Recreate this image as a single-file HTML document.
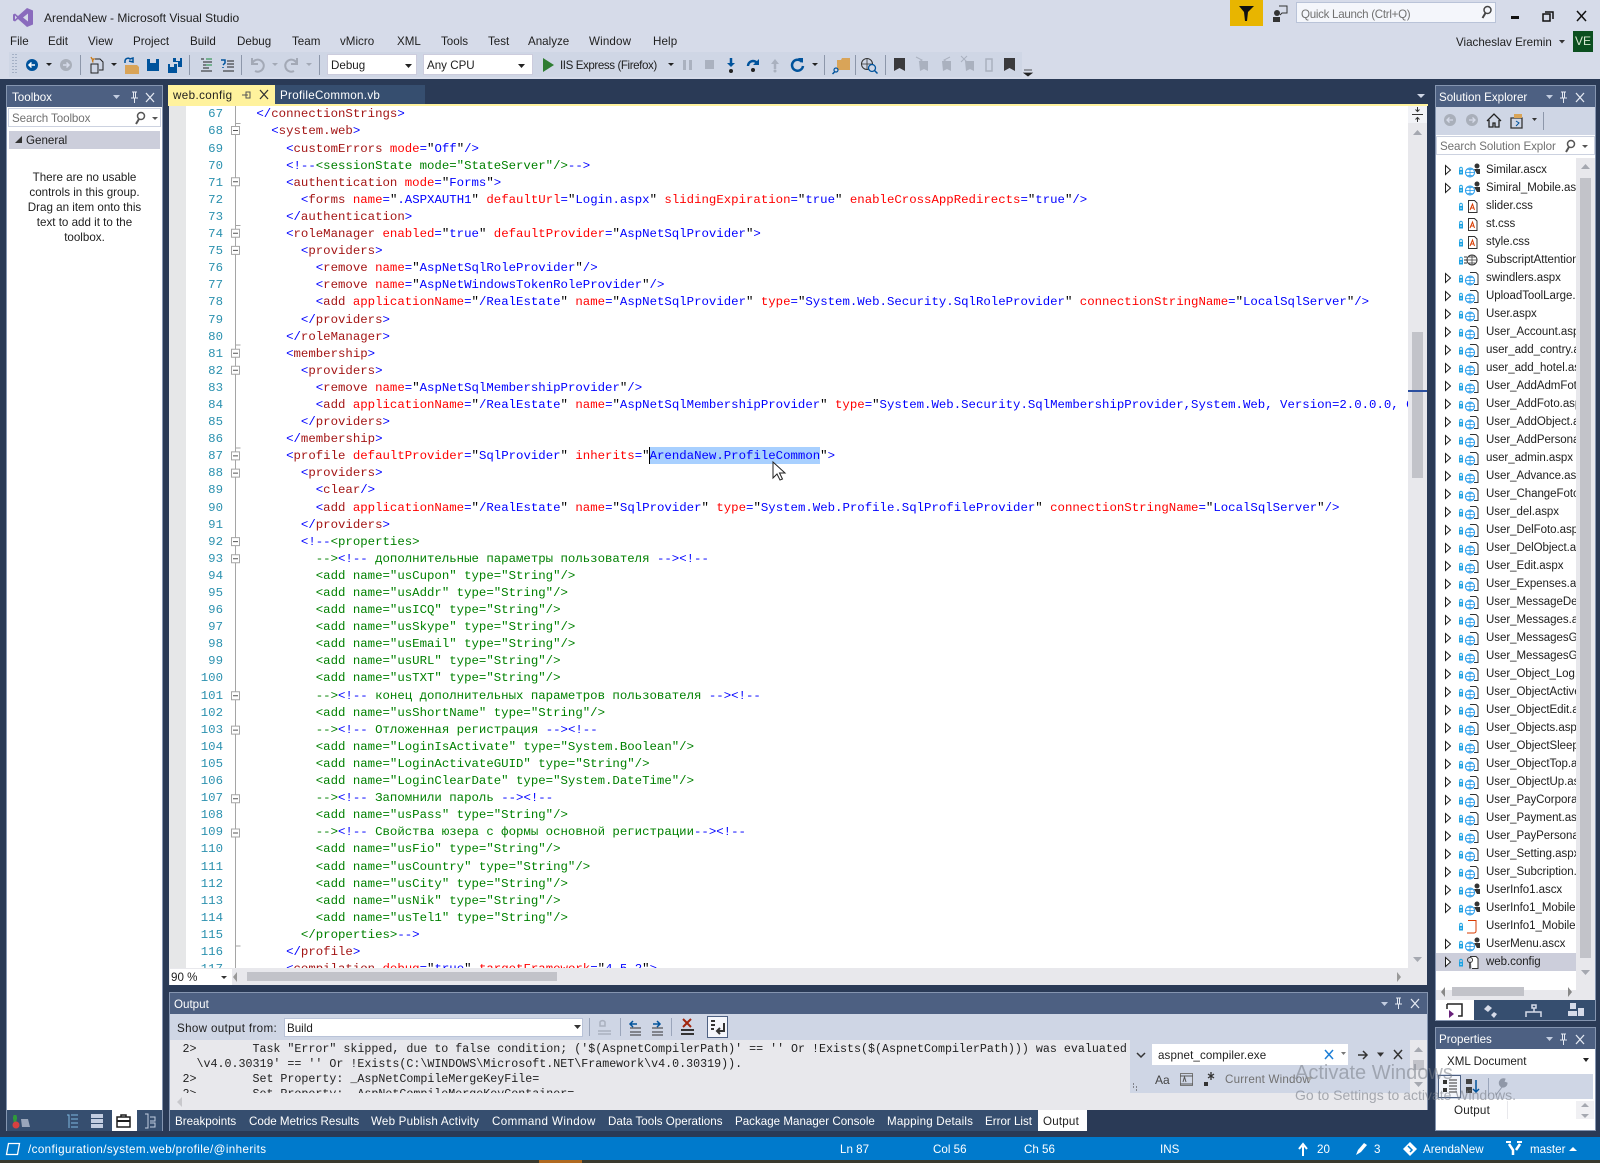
<!DOCTYPE html>
<html lang="en"><head><meta charset="utf-8"><title>ArendaNew - Microsoft Visual Studio</title>
<style>
*{box-sizing:border-box}
html,body{margin:0;padding:0}
body{width:1600px;height:1163px;position:relative;overflow:hidden;background:#d6dbe9;font:12px/16px "Liberation Sans",sans-serif;color:#1e1e1e}
.t{position:absolute;white-space:nowrap;line-height:16px;margin-top:1px}
.b{position:absolute}
.w{color:#fff}
.n{font-size:11.6px}
#code{position:absolute;left:256.4px;top:106.4px;margin:0;font:12.37px/17.1px "Liberation Mono",monospace;color:#000;white-space:pre}
#code b,#code i,#code s,#code u{font-weight:400;font-style:normal;text-decoration:none}
#code b{color:#a31515}#code i{color:#f00}#code s{color:#00f}#code u{color:#008000}
#nums{position:absolute;left:190px;width:33px;top:106.4px;margin:0;text-align:right;font:12.37px/17.1px "Liberation Mono",monospace;color:#2b91af;white-space:pre}
#out{position:absolute;left:182.5px;top:1042px;margin:0;font:11.67px/15px "Liberation Mono",monospace;color:#1e1e1e;white-space:pre}
#se p{margin:0;height:18px;line-height:18px;white-space:nowrap;position:relative;padding-left:50px;font-size:11.5px;letter-spacing:-.04px;color:#1e1e1e}
#se svg{position:absolute;left:0;top:0;width:50px;height:18px}
</style></head><body>
<svg width="0" height="0" style="position:absolute"><defs>
<g id="lock"><rect x="23" y="9" width="4" height="4.500" fill="#1ba1e2"/><rect x="24.500" y="10.500" width="1" height="1.500" fill="#fff"/><path d="M23.700 9V7.500a1.300 1.300 0 0 1 2.600 0V9" fill="none" stroke="#1ba1e2"/></g>
<path id="arr" d="M9.500 4.500l5 4.500-5 4.500z" fill="#fff" stroke="#1e1e1e"/>
<g id="globe"><circle cx="34" cy="11.500" r="4.500" fill="#fff" stroke="#1c97ea"/><path d="M29.500 11.500h9M34 7v9M31.500 8.500h5M31.500 14.500h5" stroke="#1c97ea" fill="none" stroke-width=".8"/></g>
<symbol id="A" viewBox="0 0 50 18"><use href="#arr"/><use href="#lock"/><path d="M34 3.500h6l2 2v10h-4" fill="#fff" stroke="#333"/><use href="#globe"/></symbol>
<symbol id="U" viewBox="0 0 50 18"><use href="#arr"/><use href="#lock"/><circle cx="41" cy="5" r="2.500" fill="#333"/><path d="M38 8h6v5h-3z" fill="#333"/><use href="#globe"/></symbol>
<symbol id="C" viewBox="0 0 50 18"><use href="#lock"/><path d="M32.500 3.500h6l2.500 2.500v9.500h-8.500z" fill="#fff" stroke="#333"/><path d="M34 13l2.500-6 2 6M35 11h3" stroke="#d83b01" fill="none"/></symbol>
<symbol id="G" viewBox="0 0 50 18"><use href="#lock"/><path d="M28 6h3M28 9h3M28 12h3" stroke="#333"/><circle cx="36" cy="9" r="5" fill="#fff" stroke="#333"/><path d="M31 9h10M36 4v10M33 6h6M33 12h6" stroke="#333" fill="none" stroke-width=".7"/></symbol>
<symbol id="O" viewBox="0 0 50 18"><use href="#lock"/><path d="M32 3.500h8v10.500a2 2 0 0 1-2 2h-7" fill="#fff" stroke="#d83b01"/><path d="M34 3.500h6" stroke="#d83b01"/></symbol>
<symbol id="W" viewBox="0 0 50 18"><path d="M9.500 4.500l5 4.500-5 4.500z" fill="#fff" stroke="#1e1e1e"/><use href="#lock"/><path d="M34 3.500h6l2 2v10h-6" fill="#fff" stroke="#333"/><circle cx="34" cy="7" r="2.500" fill="none" stroke="#333"/><path d="M34 9.500v6" stroke="#333" stroke-width="1.500"/></symbol>
</defs></svg>

<!-- title bar -->
<svg class="b" style="left:13px;top:7px" width="20" height="21" viewBox="0 0 20 21"><path d="M14 1l6 2.500v14L14 20 5 12l-3 2.500L0 13.500v-6l2-1 3 2.500z" fill="#8a6bbd"/><path d="M15 6.500l-5 4 5 4z" fill="#d6dbe9"/><path d="M2 8.500v4l2-2z" fill="#d6dbe9"/></svg>
<div class="t n" style="left:44px;top:9px;font-size:12px">ArendaNew - Microsoft Visual Studio</div>
<div class="t n" style="left:10px;top:33px">File</div><div class="t n" style="left:48px;top:33px">Edit</div><div class="t n" style="left:88px;top:33px">View</div><div class="t n" style="left:133px;top:33px">Project</div><div class="t n" style="left:190px;top:33px">Build</div><div class="t n" style="left:237px;top:33px">Debug</div><div class="t n" style="left:292px;top:33px">Team</div><div class="t n" style="left:340px;top:33px">vMicro</div><div class="t n" style="left:397px;top:33px">XML</div><div class="t n" style="left:441px;top:33px">Tools</div><div class="t n" style="left:488px;top:33px">Test</div><div class="t n" style="left:528px;top:33px">Analyze</div><div class="t n" style="left:589px;top:33px;letter-spacing:.15px">Window</div><div class="t n" style="left:653px;top:33px;letter-spacing:.1px">Help</div>

<div class="b" style="left:1230px;top:0;width:33px;height:26px;background:#e8b500"></div>
<svg class="b" style="left:1230px;top:0" width="80" height="26"><path d="M9 6h15l-6 6-1 9-2 0-1-9z" fill="#111"/><circle cx="47" cy="13" r="3" fill="#333"/><path d="M43 17h7v5h-7z" fill="#333"/><path d="M49 6h8v7h-5l-2 2" fill="none" stroke="#333"/></svg>
<div class="b" style="left:1296px;top:2px;width:200px;height:21px;background:#f4f6fb;border:1px solid #b9c3d8"></div>
<div class="t n" style="left:1301px;top:6px;color:#717171;letter-spacing:-.3px">Quick Launch (Ctrl+Q)</div>
<svg class="b" style="left:1478px;top:4px" width="16" height="16"><circle cx="9.500" cy="6" r="3.500" fill="none" stroke="#444" stroke-width="1.500"/><path d="M7.500 9l-3 5" stroke="#444" stroke-width="2"/></svg>
<svg class="b" style="left:1505px;top:6px" width="90" height="18"><path d="M6 10h8v3H6z" fill="#111"/><path d="M40 6h8v7M38 8h7v7h-7z" fill="none" stroke="#111" stroke-width="1.500"/><path d="M72 5l9 10M81 5l-9 10" stroke="#111" stroke-width="1.500"/></svg>
<div class="t n" style="left:1456px;top:34px">Viacheslav Eremin</div>
<svg class="b" style="left:1558px;top:39px" width="8" height="6"><path d="M1 1h6L4 4.500z" fill="#333"/></svg>
<div class="b" style="left:1573px;top:31px;width:20px;height:21px;background:#0b4f1f;color:#d8e8d0;font-size:12px;line-height:21px;text-align:center">VE</div>

<!-- toolbar -->
<div class="b" style="left:9px;top:52px;width:1013px;height:25px;background:#cfd6e5"></div>
<div class="b" style="left:327px;top:54px;width:90px;height:21px;background:#fff;border:1px solid #ccd"></div>
<div class="b" style="left:423px;top:54px;width:110px;height:21px;background:#fff;border:1px solid #ccd"></div>
<div class="t n" style="left:331px;top:57px">Debug</div><div class="t n" style="left:427px;top:57px">Any CPU</div>
<div class="t n" style="left:560px;top:57px;letter-spacing:-.42px">IIS Express (Firefox)</div>
<svg class="b" style="left:0;top:50px" width="1040" height="30" viewBox="0 0 1040 30">
<path d="M13 4v21M16 4v21" stroke="#7a8aa5" stroke-dasharray="1 2"/>
<circle cx="32" cy="15" r="6" fill="#00539c"/><path d="M35 15h-6m2.500-2.500L29 15l2.500 2.500" stroke="#fff" stroke-width="1.500" fill="none"/>
<path d="M46 13h6l-3 3z" fill="#222"/>
<circle cx="66" cy="15" r="6" fill="#a9afba"/><path d="M63 15h6m-2.500-2.500L69 15l-2.500 2.500" stroke="#d6dbe9" stroke-width="1.500" fill="none"/>
<path d="M80.500 5v20M189.500 5v20M241.500 5v20M319.500 5v20M824.500 5v20M855.500 5v20M885.500 5v20" stroke="#8d97aa"/>
<path d="M95 9h5l3 3v8h-4M91 14h7v9h-7z" fill="none" stroke="#222"/><path d="M91 7l1 2 2 0-1.500 1.500.5 2" fill="none" stroke="#c87a1a" stroke-width="1.300"/>
<path d="M111 13h6l-3 3z" fill="#222"/>
<path d="M125 15h12l2 2v7h-14z" fill="#d9a458"/><path d="M125 13v-2a3 3 0 0 1 5-2l3-1v4l-4-1" fill="none" stroke="#00539c" stroke-width="1.500"/>
<path d="M147 9h12v12h-12z" fill="#00539c"/><path d="M150 9h6v4h-6z" fill="#cfd6e5"/>
<path d="M168 14h9v9h-9z" fill="#00539c"/><path d="M173 8h9v9h-4v-5h-5z" fill="#00539c"/><path d="M176 8h4v3h-4zM170 14h4v3h-4z" fill="#cfd6e5"/>
<path d="M201 9h3M203 12h9M203 15h9M203 18h6M201 21h11" stroke="#222"/><path d="M206 9h6M206 15h6" stroke="#1a8a3a"/>
<path d="M221 10h4v3l-2 2M223 17v1" stroke="#00539c" stroke-width="1.500" fill="none"/><path d="M227 11h7M227 14h7M227 17h7M223 21h11" stroke="#222"/>
<path d="M252 8v6h6M252 14a6 6 0 1 1 3 7" fill="none" stroke="#a3a9b6" stroke-width="2"/><path d="M272 13h6l-3 3z" fill="#a3a9b6"/>
<path d="M297 8v6h-6M297 14a6 6 0 1 0-3 7" fill="none" stroke="#a3a9b6" stroke-width="2"/><path d="M306 13h6l-3 3z" fill="#a3a9b6"/>
<path d="M405 14h7l-3.500 4zM518 14h7l-3.500 4z" fill="#222"/>
<path d="M543 8l11 7-11 7z" fill="#2f7d32"/>
<path d="M668 13h6l-3 3z" fill="#222"/>
<path d="M683 10h3v10h-3zM689 10h3v10h-3zM705 10h9v9h-9z" fill="#aab1bf"/>
<path d="M731 8v7" stroke="#00539c" stroke-width="2.500"/><path d="M727 13l4 4 4-4z" fill="#00539c"/><circle cx="731" cy="21" r="2" fill="#222"/>
<path d="M748 16a5 5 0 0 1 9-3" fill="none" stroke="#00539c" stroke-width="2.500"/><path d="M759 9v6h-6z" fill="#00539c"/><circle cx="753" cy="20" r="2" fill="#222"/>
<path d="M775 19v-6" stroke="#aab1bf" stroke-width="2.500"/><path d="M771 14l4-5 4 5z" fill="#aab1bf"/><circle cx="775" cy="21" r="1.500" fill="#aab1bf"/>
<path d="M802 12a5.500 5.500 0 1 0 1 4" fill="none" stroke="#00539c" stroke-width="2.500"/><path d="M798 8l5 0 0 5z" fill="#00539c"/><path d="M812 13h6l-3 3z" fill="#222"/>
<path d="M837 10h4l1-2h8v12h-13z" fill="#d9a458"/><circle cx="836" cy="20" r="2" fill="#cfd6e5" stroke="#00539c" stroke-width="1.200"/><path d="M834.500 22l-2 2" stroke="#00539c" stroke-width="1.500"/>
<circle cx="867" cy="14" r="5.500" fill="none" stroke="#333"/><path d="M861.500 14h11M867 8.500v11" stroke="#333" stroke-width=".8"/><circle cx="872" cy="18" r="3.500" fill="#cfd6e5" stroke="#00539c" stroke-width="1.300"/><path d="M874.500 20.500l3 3" stroke="#00539c" stroke-width="1.500"/>
<path d="M894 8h11v13l-5.500-3-5.500 3zM1004 8h11v13l-5.500-3-5.500 3z" fill="#3a3a3c"/>
<path d="M919 11h9v10l-4-2-4 2zM942 11h9v10l-4-2-4 2zM965 11h9v10l-4-2-4 2z" fill="#aab1bf"/><path d="M916 7l6 3-3 2M950 7l-6 3 3 2M961 6l6 6M967 6l-6 6" stroke="#aab1bf" fill="none"/>
<path d="M986 9h6v12h-6z" fill="none" stroke="#aab1bf" stroke-width="1.500"/>
<path d="M1024 20h8M1024 23h8l-4 3z" fill="#222" stroke="#222" stroke-width=".8"/>
</svg>

<!-- dark body -->
<div class="b" style="left:0;top:79px;width:1600px;height:1058px;background:#2a3a56"></div>

<!-- toolbox -->
<div class="b" style="left:6px;top:85px;width:157px;height:1046px;background:#fff;border:1px solid #8595b0"></div>
<div class="b" style="left:7px;top:86px;width:155px;height:21px;background:#4d6082"></div>
<div class="t n w" style="left:12px;top:89px">Toolbox</div>
<svg class="b" style="left:110px;top:88px" width="50" height="18"><path d="M3 7h7l-3.500 4z" fill="#c3cde0"/><path d="M22 4h5M23.500 4v6h2V4M21 10h7M24.500 10v5" stroke="#e4e9f2" fill="none"/><path d="M36 5l8 9M44 5l-8 9" stroke="#e4e9f2" stroke-width="1.300"/></svg>
<div class="b" style="left:8px;top:108px;width:153px;height:19px;background:#fff;border:1px solid #ccd2e0"></div>
<div class="t n" style="left:12px;top:110px;color:#717171;letter-spacing:-.1px">Search Toolbox</div>
<svg class="b" style="left:132px;top:110px" width="28" height="16"><circle cx="9" cy="6" r="3.500" fill="none" stroke="#555" stroke-width="1.500"/><path d="M7 9l-3 5" stroke="#555" stroke-width="2"/><path d="M20 7h6l-3 3z" fill="#555"/></svg>
<div class="b" style="left:9px;top:131px;width:151px;height:18px;background:#cccedb"></div>
<svg class="b" style="left:14px;top:135px" width="9" height="9"><path d="M8 1v7H1z" fill="#333"/></svg>
<div class="t n" style="left:26px;top:132px">General</div>
<div class="b n" style="left:9px;top:169.500px;width:151px;text-align:center;line-height:15px">There are no usable<br>controls in this group.<br>Drag an item onto this<br>text to add it to the<br>toolbox.</div>
<div class="b" style="left:7px;top:1110px;width:155px;height:21px;background:#364e6f"></div>
<div class="b" style="left:112px;top:1110px;width:25px;height:21px;background:#fff"></div>
<svg class="b" style="left:7px;top:1110px" width="155" height="21"><path d="M8 5v7M6 8h4" stroke="#2f9a3a" stroke-width="3"/><circle cx="9" cy="15" r="3.500" fill="#d84040"/><path d="M14 9h7l2 8h-8z" fill="#9aa6bb"/><path d="M60 5h2v13M64 5h7M64 9h7M64 13h7M64 17h7" stroke="#7fb8e0" fill="none"/><path d="M84 4h12v4H84zM84 9h12v4H84zM84 14h12v4H84z" fill="#c3cde0"/><path d="M110 7h13v10h-13zM114 7V5h5v2" fill="none" stroke="#1e1e1e" stroke-width="1.500"/><path d="M110 11h13" stroke="#1e1e1e" stroke-width="2"/><path d="M138 4h3v14h-3M143 7h5v4h-5M143 13h5v4h-5" fill="none" stroke="#c3cde0"/></svg>

<!-- doc tabs -->
<div class="b" style="left:168px;top:85px;width:107px;height:19px;background:#fff29d"></div>
<div class="t n" style="left:173px;top:87px;letter-spacing:.4px">web.config</div>
<svg class="b" style="left:240px;top:88px" width="32" height="14"><path d="M2 7h6M6 4v6h4V4z" stroke="#555" fill="none"/><path d="M20 2l8 9M28 2l-8 9" stroke="#333" stroke-width="1.300"/></svg>
<div class="b" style="left:275px;top:85px;width:150px;height:19px;background:#364e6f"></div>
<div class="t n w" style="left:280px;top:87px;letter-spacing:.3px">ProfileCommon.vb</div>
<div class="b" style="left:168px;top:104px;width:1260px;height:2px;background:#fff29d"></div>
<svg class="b" style="left:1416px;top:92px" width="10" height="8"><path d="M1 2h8L5 6z" fill="#cfd6e5"/></svg>

<!-- editor -->
<div class="b" style="left:169px;top:106px;width:1239px;height:862px;background:#fff;overflow:hidden" id="ed">
<div class="b" style="left:0;top:0;width:17px;height:862px;background:#e6e7e8"></div>
</div>
<div class="b" style="left:169px;top:106px;width:1239px;height:862px;overflow:hidden">
<div style="position:absolute;left:-169px;top:-106px;width:1600px;height:1163px">
<div class="b" style="left:649.300px;top:447px;width:170.700px;height:17px;background:#a8d0ff"></div>
<pre id="nums">67
68
69
70
71
72
73
74
75
76
77
78
79
80
81
82
83
84
85
86
87
88
89
90
91
92
93
94
95
96
97
98
99
100
101
102
103
104
105
106
107
108
109
110
111
112
113
114
115
116
117</pre>
<svg class="b" style="left:228px;top:106px" width="16" height="880"><path d="M7.500 0v880" stroke="#a5a5a5"/>
<g fill="#fff" stroke="#a5a5a5"><path d="M3.500 20.500h8v8h-8zM3.500 71.800h8v8h-8zM3.500 123.200h8v8h-8zM3.500 140.400h8v8h-8zM3.500 243.200h8v8h-8zM3.500 260.300h8v8h-8zM3.500 345.900h8v8h-8zM3.500 363.100h8v8h-8zM3.500 431.600h8v8h-8zM3.500 448.700h8v8h-8zM3.500 585.800h8v8h-8zM3.500 620.100h8v8h-8zM3.500 688.700h8v8h-8zM3.500 723h8v8h-8z"/></g>
<path d="M5 24.500h5M5 75.800h5M5 127.200h5M5 144.400h5M5 247.200h5M5 264.300h5M5 349.900h5M5 367.100h5M5 435.600h5M5 452.700h5M5 589.800h5M5 624.100h5M5 692.700h5M5 727h5" stroke="#555"/>
<path d="M7.500 17.500h5M7.500 119.500h5M7.500 239h5M7.500 342h5M7.500 840h5" stroke="#a5a5a5"/></svg>
<pre id="code"><s>&lt;/</s><b>connectionStrings</b><s>&gt;</s>
  <s>&lt;</s><b>system.web</b><s>&gt;</s>
    <s>&lt;</s><b>customErrors</b> <i>mode</i><s>=</s>"<s>Off</s>"<s>/&gt;</s>
    <s>&lt;!--</s><u>&lt;sessionState mode="StateServer"/&gt;</u><s>--&gt;</s>
    <s>&lt;</s><b>authentication</b> <i>mode</i><s>=</s>"<s>Forms</s>"<s>&gt;</s>
      <s>&lt;</s><b>forms</b> <i>name</i><s>=</s>"<s>.ASPXAUTH1</s>" <i>defaultUrl</i><s>=</s>"<s>Login.aspx</s>" <i>slidingExpiration</i><s>=</s>"<s>true</s>" <i>enableCrossAppRedirects</i><s>=</s>"<s>true</s>"<s>/&gt;</s>
    <s>&lt;/</s><b>authentication</b><s>&gt;</s>
    <s>&lt;</s><b>roleManager</b> <i>enabled</i><s>=</s>"<s>true</s>" <i>defaultProvider</i><s>=</s>"<s>AspNetSqlProvider</s>"<s>&gt;</s>
      <s>&lt;</s><b>providers</b><s>&gt;</s>
        <s>&lt;</s><b>remove</b> <i>name</i><s>=</s>"<s>AspNetSqlRoleProvider</s>"<s>/&gt;</s>
        <s>&lt;</s><b>remove</b> <i>name</i><s>=</s>"<s>AspNetWindowsTokenRoleProvider</s>"<s>/&gt;</s>
        <s>&lt;</s><b>add</b> <i>applicationName</i><s>=</s>"<s>/RealEstate</s>" <i>name</i><s>=</s>"<s>AspNetSqlProvider</s>" <i>type</i><s>=</s>"<s>System.Web.Security.SqlRoleProvider</s>" <i>connectionStringName</i><s>=</s>"<s>LocalSqlServer</s>"<s>/&gt;</s>
      <s>&lt;/</s><b>providers</b><s>&gt;</s>
    <s>&lt;/</s><b>roleManager</b><s>&gt;</s>
    <s>&lt;</s><b>membership</b><s>&gt;</s>
      <s>&lt;</s><b>providers</b><s>&gt;</s>
        <s>&lt;</s><b>remove</b> <i>name</i><s>=</s>"<s>AspNetSqlMembershipProvider</s>"<s>/&gt;</s>
        <s>&lt;</s><b>add</b> <i>applicationName</i><s>=</s>"<s>/RealEstate</s>" <i>name</i><s>=</s>"<s>AspNetSqlMembershipProvider</s>" <i>type</i><s>=</s>"<s>System.Web.Security.SqlMembershipProvider,System.Web, Version=2.0.0.0, Culture</s>"
      <s>&lt;/</s><b>providers</b><s>&gt;</s>
    <s>&lt;/</s><b>membership</b><s>&gt;</s>
    <s>&lt;</s><b>profile</b> <i>defaultProvider</i><s>=</s>"<s>SqlProvider</s>" <i>inherits</i><s>=</s>"<s>ArendaNew.ProfileCommon</s>"<s>&gt;</s>
      <s>&lt;</s><b>providers</b><s>&gt;</s>
        <s>&lt;</s><b>clear</b><s>/&gt;</s>
        <s>&lt;</s><b>add</b> <i>applicationName</i><s>=</s>"<s>/RealEstate</s>" <i>name</i><s>=</s>"<s>SqlProvider</s>" <i>type</i><s>=</s>"<s>System.Web.Profile.SqlProfileProvider</s>" <i>connectionStringName</i><s>=</s>"<s>LocalSqlServer</s>"<s>/&gt;</s>
      <s>&lt;/</s><b>providers</b><s>&gt;</s>
      <s>&lt;!--</s><u>&lt;properties&gt;</u>
        <u>--&gt;</u><s>&lt;!--</s><u> дополнительные параметры пользователя </u><s>--&gt;&lt;!--</s>
        <u>&lt;add name="usCupon" type="String"/&gt;</u>
        <u>&lt;add name="usAddr" type="String"/&gt;</u>
        <u>&lt;add name="usICQ" type="String"/&gt;</u>
        <u>&lt;add name="usSkype" type="String"/&gt;</u>
        <u>&lt;add name="usEmail" type="String"/&gt;</u>
        <u>&lt;add name="usURL" type="String"/&gt;</u>
        <u>&lt;add name="usTXT" type="String"/&gt;</u>
        <u>--&gt;</u><s>&lt;!--</s><u> конец дополнительных параметров пользователя </u><s>--&gt;&lt;!--</s>
        <u>&lt;add name="usShortName" type="String"/&gt;</u>
        <u>--&gt;</u><s>&lt;!--</s><u> Отложенная регистрация </u><s>--&gt;&lt;!--</s>
        <u>&lt;add name="LoginIsActivate" type="System.Boolean"/&gt;</u>
        <u>&lt;add name="LoginActivateGUID" type="String"/&gt;</u>
        <u>&lt;add name="LoginClearDate" type="System.DateTime"/&gt;</u>
        <u>--&gt;</u><s>&lt;!--</s><u> Запомнили пароль </u><s>--&gt;&lt;!--</s>
        <u>&lt;add name="usPass" type="String"/&gt;</u>
        <u>--&gt;</u><s>&lt;!--</s><u> Свойства юзера с формы основной регистрации</u><s>--&gt;&lt;!--</s>
        <u>&lt;add name="usFio" type="String"/&gt;</u>
        <u>&lt;add name="usCountry" type="String"/&gt;</u>
        <u>&lt;add name="usCity" type="String"/&gt;</u>
        <u>&lt;add name="usNik" type="String"/&gt;</u>
        <u>&lt;add name="usTel1" type="String"/&gt;</u>
      <u>&lt;/properties&gt;</u><s>--&gt;</s>
    <s>&lt;/</s><b>profile</b><s>&gt;</s>
    <s>&lt;</s><b>compilation</b> <i>debug</i><s>=</s>"<s>true</s>" <i>targetFramework</i><s>=</s>"<s>4.5.2</s>"<s>&gt;</s></pre>
<div class="b" style="left:649px;top:447px;width:1px;height:17px;background:#000"></div>
<svg class="b" style="left:772px;top:461px" width="16" height="22"><path d="M1 1v16l4-4 3 6 2.500-1-3-6h5.500z" fill="#fff" stroke="#222"/></svg>
</div></div>

<!-- editor v scroll -->
<div class="b" style="left:1408px;top:106px;width:19px;height:879px;background:#e8e8ec"></div>
<div class="b" style="left:1408px;top:106px;width:19px;height:17px;background:#f2f3f7"></div>
<svg class="b" style="left:1408px;top:106px" width="19" height="860"><path d="M4 8.500h11M9.500 1v4M7.500 3.500l2 2 2-2M9.500 16v-4M7.500 13.500l2-2 2 2" stroke="#333" fill="none"/><path d="M5 29l4.500-5 4.500 5z" fill="#a5a8b0"/><path d="M5 851l4.500 5 4.500-5z" fill="#a5a8b0"/></svg>
<div class="b" style="left:1412px;top:332px;width:11px;height:146px;background:#c2c3c9"></div>
<div class="b" style="left:1408px;top:390px;width:19px;height:2px;background:#2b4f9f"></div>
<!-- editor h scroll -->
<div class="b" style="left:169px;top:968px;width:1239px;height:17px;background:#e8e8ec"></div>
<div class="b" style="left:170px;top:969px;width:62px;height:16px;background:#fff"></div>
<div class="t n" style="left:171px;top:969px">90 %</div>
<svg class="b" style="left:218px;top:970px" width="20" height="14"><path d="M3 6h6l-3 3z" fill="#333"/><path d="M19 2l-4 5 4 5z" fill="#999"/></svg>
<div class="b" style="left:247px;top:972px;width:310px;height:9px;background:#c2c3c9"></div>
<svg class="b" style="left:1396px;top:970px" width="8" height="14"><path d="M1 2l4 5-4 5z" fill="#999"/></svg>

<!-- output -->
<div class="b" style="left:169px;top:992px;width:1259px;height:139px;background:#e8e8ec;border:1px solid #8595b0"></div>
<div class="b" style="left:170px;top:993px;width:1257px;height:21px;background:#4d6082"></div>
<div class="t n w" style="left:174px;top:996px">Output</div>
<svg class="b" style="left:1378px;top:995px" width="50" height="18"><path d="M3 7h7l-3.500 4z" fill="#c3cde0"/><path d="M18 3h5M19.500 3v6h2V3M17 9h7M20.500 9v5" stroke="#e4e9f2" fill="none"/><path d="M33 4l8 9M41 4l-8 9" stroke="#e4e9f2" stroke-width="1.300"/></svg>
<div class="b" style="left:170px;top:1014px;width:1257px;height:26px;background:#cfd6e5"></div>
<div class="t n" style="left:177px;top:1020px;letter-spacing:.35px">Show output from:</div>
<div class="b" style="left:284px;top:1018px;width:299px;height:19px;background:#fff;border:1px solid #b9c3d8"></div>
<div class="t n" style="left:287px;top:1020px">Build</div>
<svg class="b" style="left:570px;top:1014px" width="170" height="26"><path d="M4 11h7l-3.500 4z" fill="#333"/><path d="M19.500 4v18M50.500 4v18M101.500 4v18" stroke="#9aa5ba"/><path d="M30 8a3 3 0 0 1 5 0v4h-5zM28 17h13M28 20h13" stroke="#aab1bf" fill="none" stroke-width="1.500"/><path d="M60 14h11M60 18h11M60 21h11" stroke="#333"/><path d="M67 10h-7m3-3l-3 3 3 3" stroke="#00539c" stroke-width="1.500" fill="none"/><path d="M82 14h11M82 18h11M82 21h11" stroke="#333"/><path d="M83 10h7m-3-3l3 3-3 3" stroke="#00539c" stroke-width="1.500" fill="none"/><path d="M113 5l8 8M121 5l-8 8" stroke="#a1260d" stroke-width="2"/><path d="M111 16h13M111 20h13" stroke="#333" stroke-width="2"/><rect x="137.500" y="2.500" width="20" height="21" fill="#f4f6fb" stroke="#4d6082"/><path d="M141 7h4M141 11h4M141 15h3" stroke="#333" stroke-width="2"/><path d="M154 9v8h-7m3-3l-3 3 3 3" stroke="#333" stroke-width="2" fill="none"/></svg>
<div class="b" style="left:170px;top:1040px;width:1238px;height:53px;overflow:hidden"><div style="position:absolute;left:-170px;top:-1040px;width:1600px;height:1163px">
<pre id="out">2&gt;        Task "Error" skipped, due to false condition; ('$(AspnetCompilerPath)' == '' Or !Exists($(AspnetCompilerPath))) was evaluated
  \v4.0.30319' == '' Or !Exists(C:\WINDOWS\Microsoft.NET\Framework\v4.0.30319)).
2&gt;        Set Property: _AspNetCompileMergeKeyFile=
2&gt;        Set Property: _AspNetCompileMergeKeyContainer=</pre></div></div>
<div class="b" style="left:1130px;top:1040px;width:280px;height:53px;background:#cfd6e5"></div>
<div class="b" style="left:1152px;top:1044px;width:196px;height:21px;background:#fff"></div>
<div class="t n" style="left:1158px;top:1047px;letter-spacing:.1px">aspnet_compiler.exe</div>
<div class="t n" style="left:1225px;top:1071px;color:#717171;letter-spacing:.2px">Current Window</div>
<div class="t" style="left:1155px;top:1071px;font-size:12px;color:#444">Aa</div>
<svg class="b" style="left:1130px;top:1040px" width="280" height="53"><path d="M7 13l4 4 4-4" stroke="#333" stroke-width="1.500" fill="none"/><path d="M195 10l8 9M203 10l-8 9" stroke="#1c7ed6" stroke-width="1.500"/><path d="M211 12h5l-2.500 3z" fill="#777"/><path d="M228 15h9m-4-4l4 4-4 4" stroke="#333" stroke-width="1.500" fill="none"/><path d="M248 13h5l-2.500 3zM3 47h1M6 47h1M3 44h1M6 50h1" stroke="#333" fill="#333"/><path d="M264 10l8 9M272 10l-8 9" stroke="#333" stroke-width="1.500"/><rect x="50.500" y="33.500" width="12" height="12" fill="none" stroke="#777"/><path d="M50 36h13M50 44h13" stroke="#555"/><path d="M53 42l1.500-5 1.500 5" stroke="#555" fill="none"/><path d="M74 42h4v4h-4z" fill="#333"/><path d="M81 32v8M78 34l6 4M84 34l-6 4" stroke="#333" stroke-width="1.300"/><path d="M176 37h7l-3.500 4z" fill="#aaa"/></svg>
<svg class="b" style="left:1410px;top:1040px" width="17" height="53"><path d="M4 12l4.500-5 4.500 5zM4 42l4.500 5 4.500-5z" fill="#a5a8b0"/><path d="M3 20h11v10H3z" fill="#c2c3c9"/></svg>
<svg class="b" style="left:175px;top:1095px" width="10" height="14"><path d="M7 2l-5 5 5 5z" fill="#c8c8cc"/></svg>
<div class="b" style="left:170px;top:1110px;width:1258px;height:21px;background:#364e6f"></div>
<div class="b" style="left:1038px;top:1110px;width:49px;height:21px;background:#fff"></div>
<div class="b" style="left:1087px;top:1110px;width:342px;height:21px;background:#2a3a56"></div>
<div class="t n w" style="left:175px;top:1113px">Breakpoints</div><div class="t n w" style="left:249px;top:1113px">Code Metrics Results</div><div class="t n w" style="left:371px;top:1113px;letter-spacing:.2px">Web Publish Activity</div><div class="t n w" style="left:492px;top:1113px;letter-spacing:.42px">Command Window</div><div class="t n w" style="left:608px;top:1113px">Data Tools Operations</div><div class="t n w" style="left:735px;top:1113px">Package Manager Console</div><div class="t n w" style="left:887px;top:1113px;letter-spacing:.2px">Mapping Details</div><div class="t n w" style="left:985px;top:1113px">Error List</div><div class="t n" style="left:1043px;top:1113px;letter-spacing:.2px">Output</div>

<!-- solution explorer -->
<div class="b" style="left:1435px;top:85px;width:161px;height:936px;background:#fff;border:1px solid #8595b0"></div>
<div class="b" style="left:1436px;top:86px;width:159px;height:21px;background:#4d6082"></div>
<div class="t n w" style="left:1439px;top:89px">Solution Explorer</div>
<svg class="b" style="left:1543px;top:88px" width="52" height="18"><path d="M3 7h7l-3.500 4z" fill="#c3cde0"/><path d="M18 4h5M19.500 4v6h2V4M17 10h7M20.500 10v5" stroke="#e4e9f2" fill="none"/><path d="M33 5l8 9M41 5l-8 9" stroke="#e4e9f2" stroke-width="1.300"/></svg>
<div class="b" style="left:1436px;top:107px;width:159px;height:28px;background:#cfd6e5"></div>
<svg class="b" style="left:1436px;top:107px" width="159" height="28"><circle cx="14" cy="13" r="6" fill="#a9afba"/><circle cx="36" cy="13" r="6" fill="#a9afba"/><path d="M17 13h-6m2.500-2.500L11 13l2.500 2.500M33 13h6m-2.500-2.500L39 13l-2.500 2.500" stroke="#d6dbe9" stroke-width="1.300" fill="none"/><path d="M51 14l7-7 7 7M53 13v7h4v-4h2v4h4v-7" fill="none" stroke="#222" stroke-width="1.300"/><path d="M75 11h11v10H75z" fill="none" stroke="#333" stroke-width="1.300"/><path d="M78 7h8v4h-8z" fill="#d9a458"/><path d="M80 14l3 2-3 3" stroke="#00539c" fill="none"/><path d="M96 11h5l-2.500 3z" fill="#333"/><path d="M107.500 5v18" stroke="#8d97aa"/></svg>
<div class="b" style="left:1436px;top:136px;width:159px;height:19px;background:#fff;border:1px solid #ccd2e0"></div>
<div class="t n" style="left:1440px;top:138px;color:#717171;overflow:hidden;width:116px;letter-spacing:-.1px">Search Solution Explorer (Ctrl+;)</div>
<svg class="b" style="left:1563px;top:138px" width="30" height="16"><circle cx="8" cy="6" r="3.500" fill="none" stroke="#555" stroke-width="1.500"/><path d="M6 9l-3 5" stroke="#555" stroke-width="2"/><path d="M19 7h6l-3 3z" fill="#555"/></svg>
<div class="b" style="left:1436px;top:953px;width:140px;height:18px;background:#cccedb"></div>
<div id="se" class="b" style="left:1436px;top:161px;width:140px;height:828px;overflow:hidden">
<p><svg><use href="#U"/></svg>Similar.ascx</p>
<p><svg><use href="#U"/></svg>Simiral_Mobile.ascx</p>
<p><svg><use href="#C"/></svg>slider.css</p>
<p><svg><use href="#C"/></svg>st.css</p>
<p><svg><use href="#C"/></svg>style.css</p>
<p><svg><use href="#G"/></svg>SubscriptAttention.asmx</p>
<p><svg><use href="#A"/></svg>swindlers.aspx</p>
<p><svg><use href="#A"/></svg>UploadToolLarge.aspx</p>
<p><svg><use href="#A"/></svg>User.aspx</p>
<p><svg><use href="#A"/></svg>User_Account.aspx</p>
<p><svg><use href="#A"/></svg>user_add_contry.aspx</p>
<p><svg><use href="#A"/></svg>user_add_hotel.aspx</p>
<p><svg><use href="#A"/></svg>User_AddAdmFoto.aspx</p>
<p><svg><use href="#A"/></svg>User_AddFoto.aspx</p>
<p><svg><use href="#A"/></svg>User_AddObject.aspx</p>
<p><svg><use href="#A"/></svg>User_AddPersonal.aspx</p>
<p><svg><use href="#A"/></svg>user_admin.aspx</p>
<p><svg><use href="#A"/></svg>User_Advance.aspx</p>
<p><svg><use href="#A"/></svg>User_ChangeFoto.aspx</p>
<p><svg><use href="#A"/></svg>User_del.aspx</p>
<p><svg><use href="#A"/></svg>User_DelFoto.aspx</p>
<p><svg><use href="#A"/></svg>User_DelObject.aspx</p>
<p><svg><use href="#A"/></svg>User_Edit.aspx</p>
<p><svg><use href="#A"/></svg>User_Expenses.aspx</p>
<p><svg><use href="#A"/></svg>User_MessageDel.aspx</p>
<p><svg><use href="#A"/></svg>User_Messages.aspx</p>
<p><svg><use href="#A"/></svg>User_MessagesGr.aspx</p>
<p><svg><use href="#A"/></svg>User_MessagesGr.aspx</p>
<p><svg><use href="#A"/></svg>User_Object_Log.aspx</p>
<p><svg><use href="#A"/></svg>User_ObjectActive.aspx</p>
<p><svg><use href="#A"/></svg>User_ObjectEdit.aspx</p>
<p><svg><use href="#A"/></svg>User_Objects.aspx</p>
<p><svg><use href="#A"/></svg>User_ObjectSleep.aspx</p>
<p><svg><use href="#A"/></svg>User_ObjectTop.aspx</p>
<p><svg><use href="#A"/></svg>User_ObjectUp.aspx</p>
<p><svg><use href="#A"/></svg>User_PayCorporate.aspx</p>
<p><svg><use href="#A"/></svg>User_Payment.aspx</p>
<p><svg><use href="#A"/></svg>User_PayPersonal.aspx</p>
<p><svg><use href="#A"/></svg>User_Setting.aspx</p>
<p><svg><use href="#A"/></svg>User_Subcription.aspx</p>
<p><svg><use href="#U"/></svg>UserInfo1.ascx</p>
<p><svg><use href="#U"/></svg>UserInfo1_Mobile.ascx</p>
<p><svg><use href="#O"/></svg>UserInfo1_Mobile.xml</p>
<p><svg><use href="#U"/></svg>UserMenu.ascx</p>
<p><svg><use href="#W"/></svg>web.config</p>
</div>
<div class="b" style="left:1576px;top:158px;width:19px;height:832px;background:#e8e8ec"></div>
<svg class="b" style="left:1576px;top:158px" width="19" height="830"><path d="M5 11l4.500-5 4.500 5zM5 812l4.500 5 4.500-5z" fill="#a5a8b0"/><path d="M4 20h11v780H4z" fill="#c2c3c9"/></svg>
<div class="b" style="left:1436px;top:990px;width:159px;height:10px;background:#e8e8ec"></div>
<div class="b" style="left:1452px;top:987px;width:72px;height:9px;background:#c2c3c9"></div>
<svg class="b" style="left:1438px;top:985px" width="150" height="14"><path d="M7 2L3 7l4 5zM130 2l4 5-4 5z" fill="#888"/></svg>
<div class="b" style="left:1436px;top:1000px;width:159px;height:20px;background:#364e6f"></div>
<div class="b" style="left:1436px;top:1000px;width:38px;height:20px;background:#fff"></div>
<svg class="b" style="left:1436px;top:1000px" width="159" height="20"><path d="M11 4h15v12h-4M11 4v5" stroke="#222" fill="none" stroke-width="1.500"/><path d="M13 10l5 4-5 4z" fill="#68217a"/><path d="M52 5l4 3-4 4-4-3zM58 12l3 2-3 4-3-3z" fill="#d6dbe9"/><path d="M96 5h4v3h-4zM98 8v4M90 17v-5h15v5" stroke="#d6dbe9" fill="none" stroke-width="1.500"/><path d="M134 3h6v6h-6zM142 8h6v8h-6zM132 11h9v5h-9z" fill="#d6dbe9"/></svg>

<!-- properties -->
<div class="b" style="left:1435px;top:1027px;width:161px;height:104px;background:#fff;border:1px solid #8595b0"></div>
<div class="b" style="left:1436px;top:1028px;width:159px;height:21px;background:#4d6082"></div>
<div class="t n w" style="left:1439px;top:1031px">Properties</div>
<svg class="b" style="left:1543px;top:1030px" width="52" height="18"><path d="M3 7h7l-3.500 4z" fill="#c3cde0"/><path d="M18 4h5M19.500 4v6h2V4M17 10h7M20.500 10v5" stroke="#e4e9f2" fill="none"/><path d="M33 5l8 9M41 5l-8 9" stroke="#e4e9f2" stroke-width="1.300"/></svg>
<div class="t n" style="left:1447px;top:1053px">XML Document</div>
<svg class="b" style="left:1582px;top:1057px" width="10" height="8"><path d="M1 1h6L4 5z" fill="#222"/></svg>
<div class="b" style="left:1436px;top:1074px;width:157px;height:25px;background:#cfd6e5"></div>
<svg class="b" style="left:1438px;top:1074px" width="80" height="25"><rect x=".5" y="1.500" width="22" height="22" fill="#f4f6fb" stroke="#4d6082"/><path d="M5 6h4v4H5zM5 14h4v4H5z" fill="#333"/><path d="M11 6h8M11 9h8M11 12h8M11 15h8M11 18h8" stroke="#333"/><path d="M28 5h6v5h-6zM28 13h6v6h-6z" fill="#444"/><path d="M38 6v12m-3-3l3 3 3-3" stroke="#00539c" stroke-width="1.500" fill="none"/><path d="M50.500 4v18" stroke="#9aa5ba"/><path d="M58 21l6-8a4 4 0 0 1 3-8l-1 3 3 1a4 4 0 0 1-5 4" fill="#9098a8" stroke="#9098a8"/></svg>
<div class="b" style="left:1453px;top:1101px;width:123px;height:18px;background:#fff"></div>
<div class="b" style="left:1507px;top:1101px;width:1px;height:18px;background:#e8e8ec"></div>
<div class="t n" style="left:1454px;top:1102px;letter-spacing:.2px">Output</div>
<div class="b" style="left:1576px;top:1101px;width:18px;height:18px;background:#f0f0f3"></div>
<svg class="b" style="left:1576px;top:1101px" width="18" height="18"><path d="M5 6l4-4 4 4zM5 13l4 4 4-4z" fill="#a5a8b0"/></svg>

<!-- watermark -->
<div class="t" style="left:1295px;top:1060px;font-size:20px;line-height:24px;color:rgba(120,125,135,.55)">Activate Windows</div>
<div class="t" style="left:1295px;top:1086px;font-size:14px;color:rgba(120,125,135,.6)">Go to Settings to activate Windows.</div>

<!-- status bar -->
<div class="b" style="left:0;top:1137px;width:1600px;height:23px;background:#007acc"></div>
<div class="b" style="left:0;top:1160px;width:1600px;height:3px;background:#3a3a2e"></div>
<div class="b" style="left:539px;top:1160px;width:43px;height:3px;background:#b06a20"></div>
<svg class="b" style="left:3px;top:1140px" width="18" height="18"><path d="M5.500 3.500h11l-2 11h-11z" fill="none" stroke="#fff" stroke-width="1.300"/></svg>
<div class="t n w" style="left:28px;top:1141px;letter-spacing:.4px">/configuration/system.web/profile/@inherits</div>
<div class="t n w" style="left:840px;top:1141px">Ln 87</div><div class="t n w" style="left:933px;top:1141px">Col 56</div><div class="t n w" style="left:1024px;top:1141px">Ch 56</div><div class="t n w" style="left:1160px;top:1141px">INS</div><div class="t n w" style="left:1317px;top:1141px">20</div><div class="t n w" style="left:1374px;top:1141px">3</div><div class="t n w" style="left:1423px;top:1141px">ArendaNew</div><div class="t n w" style="left:1530px;top:1141px">master</div>
<svg class="b" style="left:1295px;top:1138px" width="290" height="22"><path d="M8 18V8M4 11l4-5 4 5" stroke="#fff" stroke-width="2" fill="none"/><path d="M61 17l2-5 6-7 3 2-6 7z" fill="#fff"/><path d="M108 11l7-7 7 7-7 7z" fill="#fff"/><path d="M113 8l4 4-2 2" stroke="#007acc" stroke-width="1.500" fill="none"/><path d="M214 6l4 6v5M225 6l-4 6" stroke="#fff" stroke-width="2.500" fill="none"/><path d="M211 4h5M222 4h5" stroke="#fff" stroke-width="2"/><path d="M274 13l4-4 4 4z" fill="#fff"/></svg>
</body></html>
